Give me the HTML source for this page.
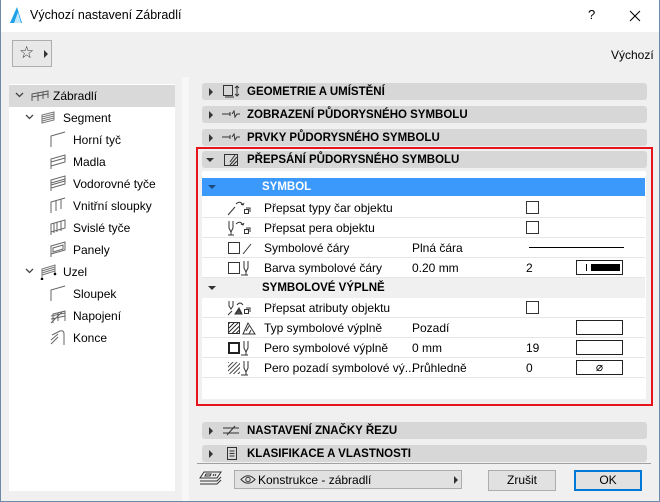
<!DOCTYPE html>
<html><head><meta charset="utf-8"><style>
*{margin:0;padding:0;box-sizing:border-box}
body{width:660px;height:502px;overflow:hidden;background:#f0f0f0;font-family:"Liberation Sans",sans-serif;font-size:12px;color:#000;position:relative}
.a{position:absolute}
.win{position:absolute;left:0;top:0;width:660px;height:502px;border:1px solid #6f8aa8;border-top:none}
.hdr{position:absolute;left:202px;width:445px;height:17px;background:#d7d7d7;border-radius:3px;font-weight:bold;font-size:11.5px;line-height:18px}
.hdr .t{position:absolute;left:45px;top:0}
.tri{position:absolute;width:0;height:0;border-top:4px solid transparent;border-bottom:4px solid transparent;border-left:4px solid #333;left:7px;top:5px}
.trid{position:absolute;width:0;height:0;border-left:4px solid transparent;border-right:4px solid transparent;border-top:4px solid #333}
.row{position:absolute;left:202px;width:443px;height:20px;background:#fff;border-bottom:1px solid #e6e6e6;line-height:20px}
.row span,.row svg{position:absolute}
.cb{position:absolute;left:324px;top:3px;width:13px;height:13px;border:1px solid #333;background:#fff}
.box{position:absolute;left:374px;top:2px;width:47px;height:15px;border:1px solid #222;background:#fff}
.tree div{position:absolute;height:22px;line-height:22px}
.btn{position:absolute;top:470px;height:21px;border:1px solid #adadad;background:#e1e1e1;text-align:center;line-height:19px}
</style></head><body>
<div class="a" style="left:0;top:0;width:660px;height:32px;background:#fff"></div>
<svg class="a" style="left:9px;top:6px" width="14" height="18"><path d="M1 17 L8 1 L13 17 Z" fill="#1ea0e6"/><path d="M5 17 L9 6 L12 17Z" fill="#bfe6fb"/></svg>
<div class="a" style="left:30px;top:8px;font-size:12.5px">Výchozí nastavení Zábradlí</div>
<div class="a" style="left:588px;top:7px;font-size:13px">?</div>
<svg class="a" style="left:629px;top:10px" width="12" height="12"><path d="M1 1L11 11M11 1L1 11" stroke="#000" stroke-width="1"/></svg>
<div class="a" style="left:12px;top:40px;width:40px;height:27px;border:1px solid #adadad;background:#e8e8e8"></div>
<div class="a" style="left:19px;top:43px;font-size:17px;color:#333">☆</div>
<div class="tri" style="left:44px;top:50px"></div>
<div class="a" style="left:611px;top:48px">Výchozí</div>
<div class="a" style="left:9px;top:84px;width:166px;height:407px;background:#fff"></div>
<div class="a" style="left:9px;top:85px;width:166px;height:22px;background:#d9d9d9"></div>
<div class="a" style="left:182px;top:77px;width:7px;height:424px;background:#f7f7f7"></div>
<svg class="a" style="left:15px;top:90px" width="40" height="190" fill="none" stroke="#444" stroke-width="1.3"><path d="M1 3L4.5 6.5L8 3M11 25L14.5 28.5L18 25M11 179L14.5 182.5L18 179"/></svg>
<div class="tree">
<svg class="a" style="left:31px;top:90px" width="18" height="12"><path d="M1 11V4L17 1V8M1 4L17 1M7 3V11M12 2V9M1 7L17 4" stroke="#555" fill="none"/></svg>
<div style="left:53px;top:85px">Zábradlí</div>
<svg class="a" style="left:41px;top:111px" width="14" height="13"><path d="M1 12V4L13 1V9ZM1 6L13 3M1 8L13 5M1 10L13 7" stroke="#777" fill="none"/></svg>
<div style="left:63px;top:107px">Segment</div>
<div style="left:73px;top:129px">Horní tyč</div>
<div style="left:73px;top:151px">Madla</div>
<div style="left:73px;top:173px">Vodorovné tyče</div>
<div style="left:73px;top:195px">Vnitřní sloupky</div>
<div style="left:73px;top:217px">Svislé tyče</div>
<div style="left:73px;top:239px">Panely</div>
<svg class="a" style="left:40px;top:264px" width="18" height="16"><path d="M2 15V5L15 1V9M2 7L15 3M2 9L15 5M2 11L15 7" stroke="#777" fill="none"/><circle cx="2" cy="15" r="1.3"/><circle cx="15" cy="10" r="1.3"/></svg>
<div style="left:63px;top:261px">Uzel</div>
<div style="left:73px;top:283px">Sloupek</div>
<div style="left:73px;top:305px">Napojení</div>
<div style="left:73px;top:327px">Konce</div>
</div>
<svg class="a" style="left:50px;top:131px" width="16" height="220" fill="none" stroke="#666">
<path d="M1 16V5L15 1"/>
<path d="M1 38V28L15 24V31L1 35M1 31L15 27"/>
<path d="M1 60V49L15 45V53L1 57M1 52L15 48M1 54L15 50"/>
<path d="M1 82V71L15 67M6 70V80M11 68V78"/>
<path d="M1 104V93L15 89V97L1 101M4 92V102M7 91V101M11 90V100"/>
<path d="M1 126V115L15 111V119L1 123Z M3 117L13 114V118L3 121Z"/>
<path d="M1 170V159L15 155"/>
<path d="M1 192L12 181M3 192V183L15 180V190M1 185L15 182M1 188L15 185M8 190V182"/>
<path d="M1 213L8 206M1 209L8 203M2 204L10 200Q14 199 14 203V214"/>
</svg>
<div class="hdr" style="top:83px"><div class="tri"></div><span class="t">GEOMETRIE A UMÍSTĚNÍ</span>
<svg class="a" style="left:20px;top:1px" width="18" height="15" fill="none" stroke="#333"><rect x="1.5" y="1.5" width="9" height="10"/><path d="M3 13H12M15 2V12M13 4L15 2L17 4M13 10L15 12L17 10"/></svg></div>
<div class="hdr" style="top:106px"><div class="tri"></div><span class="t">ZOBRAZENÍ PŮDORYSNÉHO SYMBOLU</span>
<svg class="a" style="left:20px;top:4px" width="18" height="9" fill="none" stroke="#333"><path d="M0 4H8M8 2V6M10 4L12 1L13 7L15 4H18"/></svg></div>
<div class="hdr" style="top:129px"><div class="tri"></div><span class="t">PRVKY PŮDORYSNÉHO SYMBOLU</span>
<svg class="a" style="left:20px;top:4px" width="18" height="9" fill="none" stroke="#333"><path d="M0 4H8M8 2V6M10 4L12 1L13 7L15 4H18"/></svg></div>
<div class="a" style="left:196px;top:147px;width:457px;height:259px;border:2px solid #e8141c;background:#f0f0f0"></div>
<div class="hdr" style="top:151px"><div class="trid" style="left:4px;top:7px"></div><span class="t">PŘEPSÁNÍ PŮDORYSNÉHO SYMBOLU</span>
<svg class="a" style="left:21px;top:1px" width="16" height="16" fill="none" stroke="#333"><rect x="1.5" y="2.5" width="13" height="11"/><path d="M7 13L14 5M10 13L14 9M7 10L12 3"/></svg></div>
<div class="a" style="left:202px;top:171px;width:444px;height:228px;background:#fff"></div>
<div class="a" style="left:202px;top:178px;width:443px;height:18px;background:#3b99fc;color:#fff;font-weight:bold;font-size:11.5px;line-height:18px"><div class="trid" style="left:6px;top:7px;border-top-color:#1a4a80"></div><span class="a" style="left:60px">SYMBOL</span></div>
<div class="row" style="top:198px"><svg style="left:25px;top:2px" width="32" height="16" fill="none" stroke="#333"><path d="M1 15L8 7M9 4Q13 0 16 5M14 4L16 5L17 3"/><rect x="17.5" y="9.5" width="4" height="4"/><path d="M19 8H23V12"/></svg><span style="left:62px">Přepsat typy čar objektu</span><div class="cb"></div></div>
<div class="row" style="top:218px"><svg style="left:25px;top:2px" width="32" height="16" fill="none" stroke="#333"><path d="M2 1V8L4 12L6 8V1M4 12V15M1 15H7M9 4Q13 0 16 5M14 4L16 5L17 3"/><rect x="17.5" y="9.5" width="4" height="4"/><path d="M19 8H23V12"/></svg><span style="left:62px">Přepsat pera objektu</span><div class="cb"></div></div>
<div class="row" style="top:238px"><span style="left:26px;top:4px;width:12px;height:12px;border:1px solid #333"></span><svg style="left:40px;top:4px" width="10" height="13" fill="none" stroke="#333"><path d="M1 12L9 2"/></svg><span style="left:62px">Symbolové čáry</span><span style="left:210px">Plná čára</span><span style="left:327px;top:9px;width:95px;height:1px;background:#000"></span></div>
<div class="row" style="top:258px"><span style="left:26px;top:4px;width:12px;height:12px;border:1px solid #333"></span><svg style="left:39px;top:2px" width="12" height="16" fill="none" stroke="#333"><path d="M3 1V8L5 12L7 8V1M5 12V15M0 15H7"/></svg><span style="left:62px">Barva symbolové čáry</span><span style="left:210px">0.20 mm</span><span style="left:324px">2</span><div class="box" style="padding:0"><span style="left:9px;top:3px;width:1px;height:7px;background:#000"></span><span style="left:14px;top:3px;width:29px;height:7px;background:#000"></span></div></div>
<div class="a" style="left:202px;top:278px;width:443px;height:20px;background:#f0f0f0;font-weight:bold;font-size:11.5px;line-height:20px"><div class="trid" style="left:6px;top:8px"></div><span class="a" style="left:60px">SYMBOLOVÉ VÝPLNĚ</span></div>
<div class="row" style="top:298px"><svg style="left:25px;top:2px" width="32" height="16" fill="none" stroke="#333"><path d="M2 1V6L4 9L6 6V1M1 15L5 11M8 14L12 8L15 14Z M10 5Q13 1 16 5"/><path d="M9 14L12 9L14 14Z" fill="#555"/><rect x="17.5" y="9.5" width="4" height="4"/><path d="M19 8H23V12"/></svg><span style="left:62px">Přepsat atributy objektu</span><div class="cb"></div></div>
<div class="row" style="top:318px"><span style="left:26px;top:4px;width:12px;height:12px;border:1px solid #333;background:repeating-linear-gradient(135deg,#333 0 1px,#fff 1px 3px)"></span><svg style="left:40px;top:3px" width="14" height="14" fill="none" stroke="#333"><path d="M1 13L6 2L13 13ZM4 10L7 5M7 13L9 9"/></svg><span style="left:62px">Typ symbolové výplně</span><span style="left:210px">Pozadí</span><div class="box"></div></div>
<div class="row" style="top:338px"><span style="left:26px;top:4px;width:12px;height:12px;border:2px solid #222"></span><svg style="left:39px;top:2px" width="12" height="16" fill="none" stroke="#333"><path d="M3 1V8L5 12L7 8V1M5 12V15M0 15H7"/></svg><span style="left:62px">Pero symbolové výplně</span><span style="left:210px">0 mm</span><span style="left:324px">19</span><div class="box"></div></div>
<div class="row" style="top:358px"><span style="left:26px;top:4px;width:12px;height:12px;background:repeating-linear-gradient(135deg,#555 0 1px,#fff 1px 3px)"></span><svg style="left:39px;top:2px" width="12" height="16" fill="none" stroke="#333"><path d="M3 1V8L5 12L7 8V1M5 12V15M0 15H7"/></svg><span style="left:62px">Pero pozadí symbolové vý...</span><span style="left:210px">Průhledně</span><span style="left:324px">0</span><div class="box" style="text-align:center;line-height:13px">⌀</div></div>
<div class="hdr" style="top:422px"><div class="tri"></div><span class="t">NASTAVENÍ ZNAČKY ŘEZU</span>
<svg class="a" style="left:21px;top:3px" width="16" height="11" fill="none" stroke="#333"><path d="M0 3H16M0 8H16M4 10L12 1"/></svg></div>
<div class="hdr" style="top:445px"><div class="tri"></div><span class="t">KLASIFIKACE A VLASTNOSTI</span>
<svg class="a" style="left:24px;top:1px" width="12" height="15" fill="none" stroke="#333"><rect x="1.5" y="1.5" width="9" height="12"/><path d="M3.5 5H8.5M3.5 7.5H8.5M3.5 10H8.5"/></svg></div>
<div class="a" style="left:197px;top:463px;width:454px;height:1px;background:#a0a0a0"></div>
<svg class="a" style="left:199px;top:471px" width="23" height="17" fill="none" stroke="#333"><path d="M5 1H22L18 7H1ZM1 10H18L22 6M1 13H18L22 9M7 3H12L11 5H6ZM15 3L14 5M17 3L16 5"/></svg>
<div class="a" style="left:234px;top:470px;width:228px;height:19px;border:1px solid #adadad;background:#e1e1e1"></div>
<svg class="a" style="left:240px;top:474px" width="16" height="11" fill="none" stroke="#333"><path d="M1 5.5Q8 -2 15 5.5Q8 13 1 5.5Z"/><circle cx="8" cy="5.5" r="2.2"/></svg>
<div class="a" style="left:258px;top:473px">Konstrukce - zábradlí</div>
<div class="tri" style="left:454px;top:476px"></div>
<div class="btn" style="left:488px;width:68px">Zrušit</div>
<div class="btn" style="left:574px;width:68px;border:2px solid #0078d7;line-height:17px">OK</div>
<div class="win"></div>
</body></html>
